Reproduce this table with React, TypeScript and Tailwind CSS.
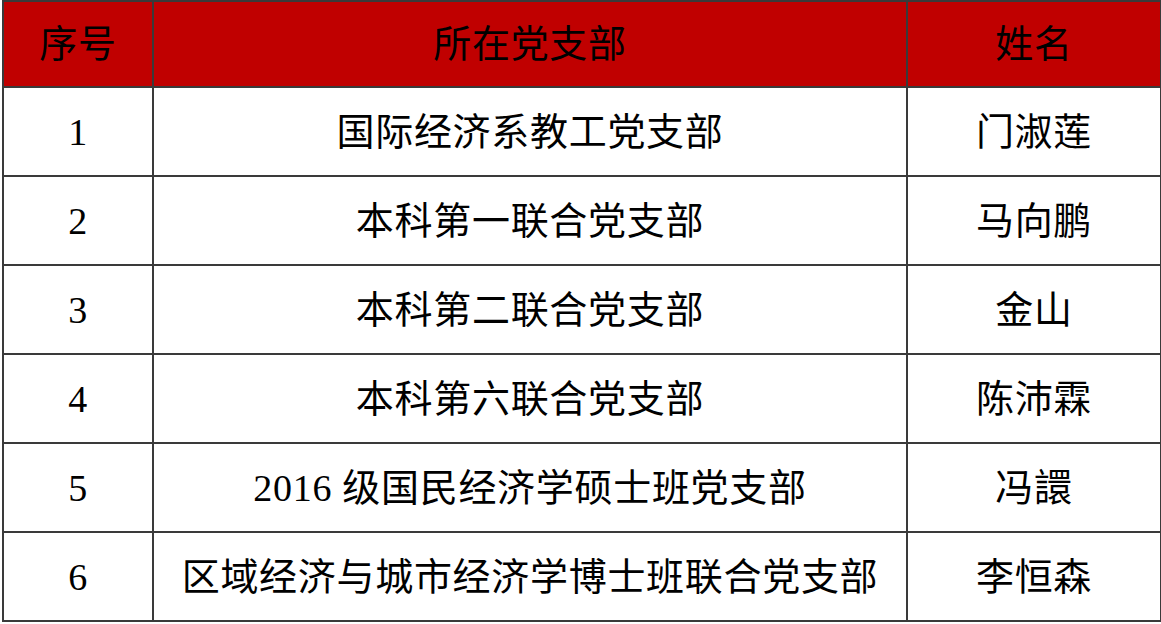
import React from 'react';

const rows = [
  { no: '1', branch: '国际经济系教工党支部', name: '门淑莲' },
  { no: '2', branch: '本科第一联合党支部', name: '马向鹏' },
  { no: '3', branch: '本科第二联合党支部', name: '金山' },
  { no: '4', branch: '本科第六联合党支部', name: '陈沛霖' },
  { no: '5', branch: '2016 级国民经济学硕士班党支部', name: '冯譞' },
  { no: '6', branch: '区域经济与城市经济学博士班联合党支部', name: '李恒森' },
];

export default function App() {
  return (
    <div className="w-[1161px] h-[624px] bg-white pl-[2px]">
      <table
        className="table-fixed w-[1158px] border-collapse text-black text-[38px] leading-none tracking-[0.7px]"
        style={{ fontFamily: "'Liberation Serif', 'Noto Sans CJK SC', serif" }}
      >
        <colgroup>
          <col className="w-[150px]" />
          <col className="w-[754px]" />
          <col className="w-[254px]" />
        </colgroup>
        <thead>
          <tr className="h-[86px] bg-[#c00000]">
            <th className="border-2 border-[#3a3a3a] font-normal">序号</th>
            <th className="border-2 border-[#3a3a3a] font-normal">所在党支部</th>
            <th className="border-2 border-[#3a3a3a] font-normal">姓名</th>
          </tr>
        </thead>
        <tbody>
          {rows.map((r) => (
            <tr key={r.no} className="h-[89px]">
              <td className="border-2 border-[#3a3a3a] text-center">{r.no}</td>
              <td className="border-2 border-[#3a3a3a] text-center">{r.branch}</td>
              <td className="border-2 border-[#3a3a3a] text-center">{r.name}</td>
            </tr>
          ))}
        </tbody>
      </table>
    </div>
  );
}
